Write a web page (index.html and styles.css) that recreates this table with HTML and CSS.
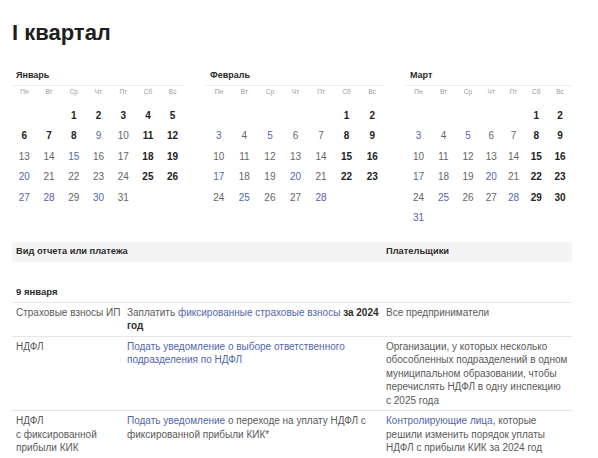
FILE: index.html
```html
<!DOCTYPE html>
<html lang="ru">
<head>
<meta charset="utf-8">
<title>I квартал</title>
<link rel="stylesheet" href="styles.css">
</head>
<body>
<div class="page">
  <h1 class="title">I квартал</h1>

  <div class="calendars">
    <section class="cal cal-jan">
      <div class="cal-month">Январь</div>
      <div class="cal-week">
        <span>Пн</span><span>Вт</span><span>Ср</span><span>Чт</span><span>Пт</span><span>Сб</span><span>Вс</span>
      </div>
      <div class="cal-days">
        <span></span><span></span>
        <span class="h">1</span><span class="h">2</span><span class="h">3</span><span class="h">4</span><span class="h">5</span>
        <span class="h">6</span><span class="h">7</span><span class="h">8</span><span class="d">9</span><span>10</span><span class="h">11</span><span class="h">12</span>
        <span>13</span><span>14</span><span class="d">15</span><span>16</span><span>17</span><span class="h">18</span><span class="h">19</span>
        <span class="d">20</span><span>21</span><span>22</span><span>23</span><span>24</span><span class="h">25</span><span class="h">26</span>
        <span class="d">27</span><span class="d">28</span><span>29</span><span class="d">30</span><span>31</span>
      </div>
    </section>

    <section class="cal cal-feb">
      <div class="cal-month">Февраль</div>
      <div class="cal-week">
        <span>Пн</span><span>Вт</span><span>Ср</span><span>Чт</span><span>Пт</span><span>Сб</span><span>Вс</span>
      </div>
      <div class="cal-days">
        <span></span><span></span><span></span><span></span><span></span>
        <span class="h">1</span><span class="h">2</span>
        <span class="d">3</span><span>4</span><span class="d">5</span><span>6</span><span>7</span><span class="h">8</span><span class="h">9</span>
        <span>10</span><span>11</span><span>12</span><span>13</span><span>14</span><span class="h">15</span><span class="h">16</span>
        <span class="d">17</span><span>18</span><span>19</span><span class="d">20</span><span>21</span><span class="h">22</span><span class="h">23</span>
        <span>24</span><span class="d">25</span><span>26</span><span>27</span><span class="d">28</span>
      </div>
    </section>

    <section class="cal cal-mar">
      <div class="cal-month">Март</div>
      <div class="cal-week">
        <span>Пн</span><span>Вт</span><span>Ср</span><span>Чт</span><span>Пт</span><span>Сб</span><span>Вс</span>
      </div>
      <div class="cal-days">
        <span></span><span></span><span></span><span></span><span></span>
        <span class="h">1</span><span class="h">2</span>
        <span class="d">3</span><span>4</span><span class="d">5</span><span>6</span><span>7</span><span class="h">8</span><span class="h">9</span>
        <span>10</span><span>11</span><span>12</span><span>13</span><span>14</span><span class="h">15</span><span class="h">16</span>
        <span class="d">17</span><span>18</span><span>19</span><span class="d">20</span><span>21</span><span class="h">22</span><span class="h">23</span>
        <span>24</span><span class="d">25</span><span>26</span><span>27</span><span class="d">28</span><span class="h">29</span><span class="h">30</span>
        <span class="d">31</span>
      </div>
    </section>
  </div>

  <table class="report">
    <colgroup>
      <col class="c1"><col class="c2"><col class="c3">
    </colgroup>
    <thead>
      <tr>
        <th colspan="2">Вид отчета или платежа</th>
        <th>Плательщики</th>
      </tr>
    </thead>
    <tbody>
      <tr class="date-row">
        <td colspan="3">9 января</td>
      </tr>
      <tr>
        <td>Страховые взносы ИП</td>
        <td>Заплатить <a href="#">фиксированные страховые взносы</a> <b>за 2024 год</b></td>
        <td>Все предприниматели</td>
      </tr>
      <tr>
        <td>НДФЛ</td>
        <td><a href="#">Подать уведомление о выборе ответственного подразделения по НДФЛ</a></td>
        <td>Организации, у которых несколько обособленных подразделений в одном муниципальном образовании, чтобы перечислять НДФЛ в одну инспекцию с 2025 года</td>
      </tr>
      <tr>
        <td>НДФЛ<br>с фиксированной прибыли КИК</td>
        <td><a href="#">Подать уведомление</a> о переходе на уплату НДФЛ с фиксированной прибыли КИК*</td>
        <td><a href="#">Контролирующие лица</a>, которые решили изменить порядок уплаты НДФЛ с прибыли КИК за 2024 год</td>
      </tr>
    </tbody>
  </table>
</div>
</body>
</html>
```

FILE: styles.css
```css
* { box-sizing: border-box; }

html, body {
  margin: 0;
  padding: 0;
  background: #ffffff;
}

body {
  font-family: "Liberation Sans", Arial, sans-serif;
  color: #555555;
}

.page {
  padding: 0 26px 0 12px;
}

.title {
  margin: 0;
  padding-top: 20px;
  font-size: 22px;
  line-height: 26px;
  font-weight: 700;
  color: #1e1e1e;
}

.calendars {
  display: flex;
  justify-content: space-between;
  margin-top: 23px;
}

.cal-jan { width: 173px; }
.cal-feb { width: 179px; }
.cal-mar { width: 166px; }

.cal-month {
  font-size: 9px;
  line-height: 12px;
  font-weight: 700;
  color: #2a2a2a;
  padding: 0 0 4px 4px;
  border-bottom: 1px solid #eeeeee;
}

.cal-week,
.cal-days {
  display: grid;
  grid-template-columns: repeat(7, 1fr);
}

.cal-mar .cal-week,
.cal-mar .cal-days {
  grid-template-columns: 25px 25px 24px 22.5px 22px 23.5px 24px;
}

.cal-week span {
  font-size: 6.5px;
  line-height: 12px;
  text-align: center;
  color: #9a9a9a;
}

.cal-days {
  margin-top: 7.5px;
  grid-auto-rows: 20.5px;
}

.cal-days span {
  font-size: 10px;
  line-height: 20.5px;
  text-align: center;
  color: #666666;
}

.cal-days .h {
  font-weight: 700;
  color: #222222;
}

.cal-days .d {
  color: #5466ad;
}

.report {
  width: 560px;
  margin-top: 13px;
  border-collapse: collapse;
  table-layout: fixed;
  font-size: 10px;
  line-height: 13.5px;
}

.report .c1 { width: 111px; }
.report .c2 { width: 259px; }
.report .c3 { width: 190px; }

.report th {
  background: #f4f4f4;
  text-align: left;
  font-size: 9.3px;
  font-weight: 700;
  color: #2e2e2e;
  height: 20px;
  padding: 0 4px;
}

.report td {
  vertical-align: top;
  padding: 3px 4px 3px 4px;
  border-bottom: 1px solid #e6e6e6;
  color: #5a5a5a;
}

.report td:first-child {
  padding-right: 0;
}

.report td:nth-child(2) {
  padding-right: 2px;
}

.report .date-row td {
  padding: 24px 4px 4px 4px;
  font-size: 9.5px;
  line-height: 12px;
  font-weight: 700;
  color: #2e2e2e;
}

.report a {
  color: #5466ad;
  text-decoration: none;
}

.report b {
  font-weight: 700;
  color: #2e2e2e;
}
```
